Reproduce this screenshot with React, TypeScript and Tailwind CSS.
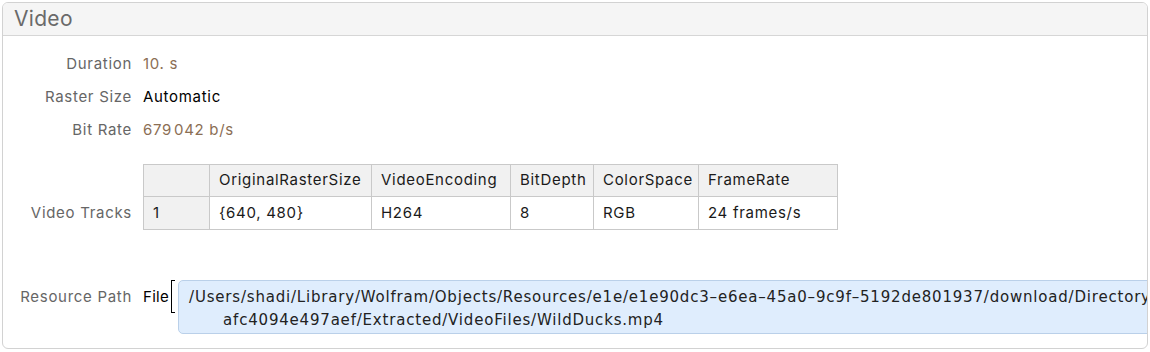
import React from "react";

const cols = ["", "OriginalRasterSize", "VideoEncoding", "BitDepth", "ColorSpace", "FrameRate"];
const row = ["1", "{640, 480}", "H264", "8", "RGB", "24 frames/s"];
const widths = ["w-[65px]", "w-[162px]", "w-[139px]", "w-[83px]", "w-[105px]", "w-[139px]"];

export default function App() {
  return (
    <div className="w-[1150px] h-[352px] bg-white p-[2px] font-['Inter',sans-serif]">
      <div className="h-[347px] w-[1146px] border border-[#d2d2d2] rounded-[6px] overflow-hidden flex flex-col">
        <div className="h-[33px] bg-[#f5f5f5] border-b border-[#d6d6d6] flex items-center pl-[11px] text-[21px] text-[#6a6a6a] tracking-[0.3px]">
          Video
        </div>
        <div className="flex flex-col pt-[12px] text-[15px] tracking-[0.7px]">
          <div className="flex h-[33px] items-center">
            <div className="w-[129px] shrink-0 text-right text-[#666]">Duration</div>
            <div className="ml-[11px] text-[#8b6e54]">10. s</div>
          </div>
          <div className="flex h-[33px] items-center">
            <div className="w-[129px] shrink-0 text-right text-[#666]">Raster Size</div>
            <div className="ml-[11px] text-black">Automatic</div>
          </div>
          <div className="flex h-[33px] items-center">
            <div className="w-[129px] shrink-0 text-right text-[#666]">Bit Rate</div>
            <div className="ml-[11px] text-[#8b6e54]">679<span className="ml-[2px]">042</span> b/s</div>
          </div>
          <div className="flex mt-[17px] items-end">
            <div className="w-[129px] shrink-0 text-right text-[#666] pb-[6px]">Video Tracks</div>
            <div className="ml-[11px] border border-[#c9c9c9] flex flex-col">
              <div className="flex h-[32px] bg-[#f1f1f1] border-b border-[#c9c9c9]">
                {cols.map((c, i) => (
                  <div
                    key={i}
                    className={`${widths[i]} ${i > 0 ? "border-l border-[#c9c9c9]" : ""} flex items-center px-[9px] whitespace-nowrap text-[#1a1a1a]`}
                  >
                    {c}
                  </div>
                ))}
              </div>
              <div className="flex h-[32px]">
                {row.map((c, i) => (
                  <div
                    key={i}
                    className={`${widths[i]} ${i > 0 ? "border-l border-[#c9c9c9] bg-white" : "bg-[#f1f1f1]"} flex items-center px-[9px] whitespace-nowrap text-[#1a1a1a]`}
                  >
                    {c}
                  </div>
                ))}
              </div>
            </div>
          </div>
          <div className="flex mt-[50px] items-start">
            <div className="w-[129px] shrink-0 whitespace-nowrap text-right text-[#666] mt-[6px]">Resource Path</div>
            <div className="ml-[11px] shrink-0 mt-[6px] text-black tracking-[0.3px]">File</div>
            <div className="ml-[2px] shrink-0 w-[4px] h-[33px] border-l-[1.5px] border-t border-b border-black" />
            <div className="ml-[3px] w-[1100px] shrink-0 h-[54px] bg-[#dfedfd] border border-[#bad0e9] rounded-[5px] pt-[5px] pl-[10px] font-['DejaVu_Sans',sans-serif] text-[15px] tracking-[0.8px] text-[#222] leading-[23px]">
              <div className="whitespace-nowrap">/Users/shadi/Library/Wolfram/Objects/Resources/e1e/e1e90dc3–e6ea–45a0–9c9f–5192de801937/download/Directory</div>
              <div className="whitespace-nowrap pl-[34px]">afc4094e497aef/Extracted/VideoFiles/WildDucks.mp4</div>
            </div>
          </div>
        </div>
      </div>
    </div>
  );
}
